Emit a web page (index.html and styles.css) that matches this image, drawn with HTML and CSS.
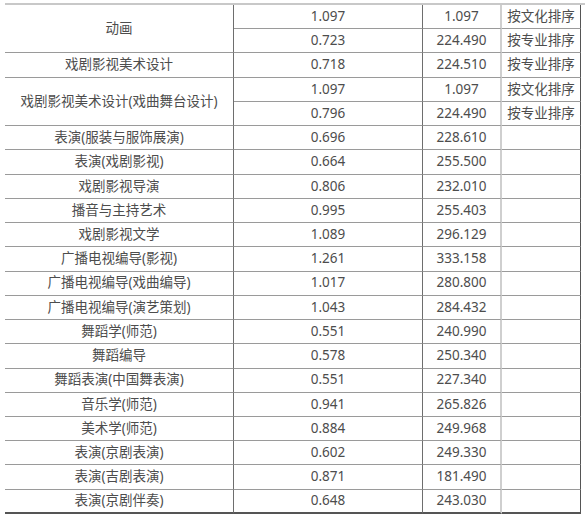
FILE: index.html
```html
<!DOCTYPE html>
<html lang="zh-CN">
<head>
<meta charset="utf-8">
<link rel="stylesheet" href="styles.css">
<title>分数表</title>
</head>
<body>
<div class="wrap">
  <div class="grid">
    <div class="c c1 top span2">动画</div>
    <div class="c c2 top">1.097</div>
    <div class="c c3 top">1.097</div>
    <div class="c c4 top">按文化排序</div>
    <div class="c c2">0.723</div>
    <div class="c c3">224.490</div>
    <div class="c c4">按专业排序</div>

    <div class="c c1">戏剧影视美术设计</div>
    <div class="c c2">0.718</div>
    <div class="c c3">224.510</div>
    <div class="c c4">按专业排序</div>

    <div class="c c1 span2">戏剧影视美术设计(戏曲舞台设计)</div>
    <div class="c c2">1.097</div>
    <div class="c c3">1.097</div>
    <div class="c c4">按文化排序</div>
    <div class="c c2">0.796</div>
    <div class="c c3">224.490</div>
    <div class="c c4">按专业排序</div>

    <div class="c c1">表演(服装与服饰展演)</div><div class="c c2">0.696</div><div class="c c3">228.610</div><div class="c c4"></div>
    <div class="c c1">表演(戏剧影视)</div><div class="c c2">0.664</div><div class="c c3">255.500</div><div class="c c4"></div>
    <div class="c c1">戏剧影视导演</div><div class="c c2">0.806</div><div class="c c3">232.010</div><div class="c c4"></div>
    <div class="c c1">播音与主持艺术</div><div class="c c2">0.995</div><div class="c c3">255.403</div><div class="c c4"></div>
    <div class="c c1">戏剧影视文学</div><div class="c c2">1.089</div><div class="c c3">296.129</div><div class="c c4"></div>
    <div class="c c1">广播电视编导(影视)</div><div class="c c2">1.261</div><div class="c c3">333.158</div><div class="c c4"></div>
    <div class="c c1">广播电视编导(戏曲编导)</div><div class="c c2">1.017</div><div class="c c3">280.800</div><div class="c c4"></div>
    <div class="c c1">广播电视编导(演艺策划)</div><div class="c c2">1.043</div><div class="c c3">284.432</div><div class="c c4"></div>
    <div class="c c1">舞蹈学(师范)</div><div class="c c2">0.551</div><div class="c c3">240.990</div><div class="c c4"></div>
    <div class="c c1">舞蹈编导</div><div class="c c2">0.578</div><div class="c c3">250.340</div><div class="c c4"></div>
    <div class="c c1">舞蹈表演(中国舞表演)</div><div class="c c2">0.551</div><div class="c c3">227.340</div><div class="c c4"></div>
    <div class="c c1">音乐学(师范)</div><div class="c c2">0.941</div><div class="c c3">265.826</div><div class="c c4"></div>
    <div class="c c1">美术学(师范)</div><div class="c c2">0.884</div><div class="c c3">249.968</div><div class="c c4"></div>
    <div class="c c1">表演(京剧表演)</div><div class="c c2">0.602</div><div class="c c3">249.330</div><div class="c c4"></div>
    <div class="c c1">表演(吉剧表演)</div><div class="c c2">0.871</div><div class="c c3">181.490</div><div class="c c4"></div>
    <div class="c c1 last">表演(京剧伴奏)</div><div class="c c2 last">0.648</div><div class="c c3 last">243.030</div><div class="c c4 last"></div>
  </div>
</div>
</body>
</html>
```
FILE: styles.css
```css
html, body {
  margin: 0;
  padding: 0;
  background: #fff;
}
.wrap {
  padding: 3px 0 0 5px;
}
.grid {
  display: grid;
  grid-template-columns: 229px 189px 79px 79px;
  grid-auto-rows: 24.24px;
  font-family: "Noto Sans", "Noto Sans CJK SC", sans-serif;
  font-size: 13.5px;
  color: #4d4d4d;
  border-top: 2px solid #c8c8c8;
}
.c {
  box-sizing: border-box;
  display: flex;
  align-items: center;
  justify-content: center;
  white-space: nowrap;
  border-bottom: 1px solid #9a9a9a;
  line-height: 1;
}
.c1 { grid-column: 1; border-right: 1px solid #6e6e6e; }
.c2 { border-right: 1px solid #6e6e6e; }
.c3 { border-right: 2px solid #cfcfcf; }
.c4 { border-right: 1px solid #555; }
.span2 { grid-row: span 2; }
.last { border-bottom: 2px solid #555; }
```
